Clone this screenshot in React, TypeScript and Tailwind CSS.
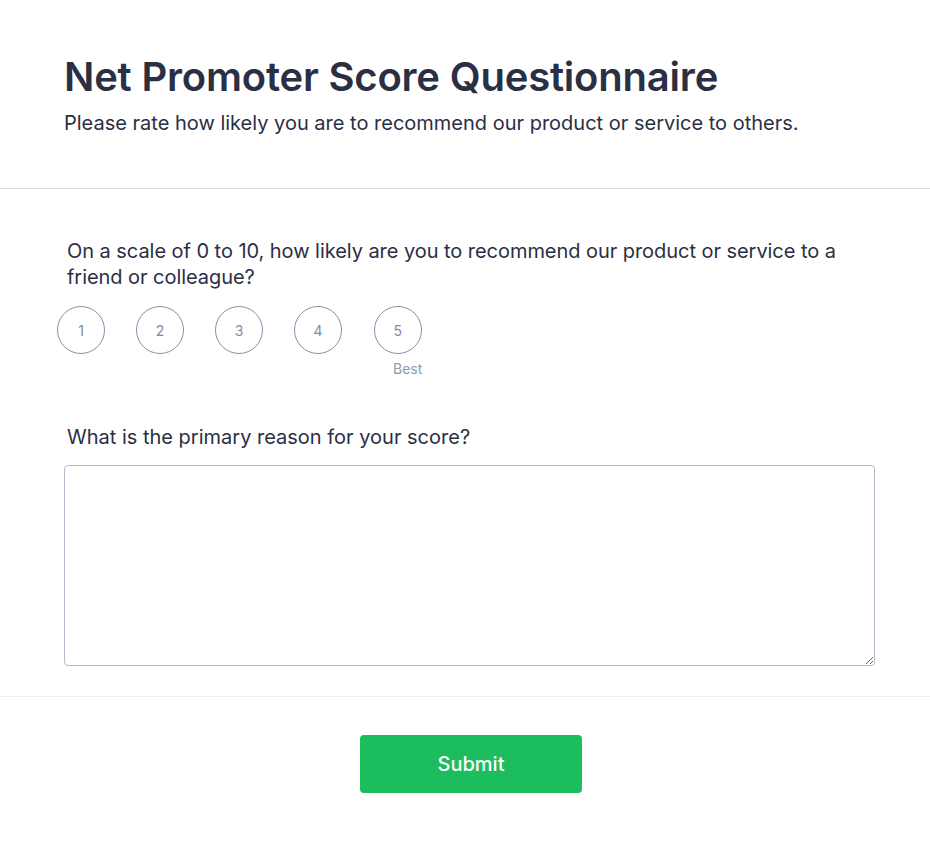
import React from 'react';

const scores = [1, 2, 3, 4, 5];

export default function App() {
  return (
    <div className="min-h-screen bg-white font-['Inter',sans-serif] text-[#2b2f44]">
      {/* Header */}
      <div className="px-16 pt-[53px] pb-[52px] border-b border-[#dcdde9]">
        <h1 className="text-[40px] leading-[48px] font-semibold tracking-[-0.2px]">Net Promoter Score Questionnaire</h1>
        <p className="mt-[9px] text-[20px] leading-[26px] text-[#2b2f44]">
          Please rate how likely you are to recommend our product or service to others.
        </p>
      </div>

      {/* Questions */}
      <div className="pt-[49px] pb-[30px] border-b border-[#eeeff5]">
        <div className="px-[67px]">
          <p className="text-[20px] leading-[26px] tracking-[-0.05px]">
            On a scale of 0 to 10, how likely are you to recommend our product or service to a friend or colleague?
          </p>
          <div className="mt-[16px] -ml-[10px] flex gap-[31px]">
            {scores.map((n) => (
              <div key={n} className="flex flex-col items-center">
                <button className="w-12 h-12 rounded-full border border-[#8990aa] text-[14px] text-[#7f8ba6] flex items-center justify-center">
                  {n}
                </button>
                {n === 5 ? (
                  <span className="mt-[5px] ml-[20px] text-[14px] leading-[20px] text-[#8d9cab]">Best</span>
                ) : (
                  <span className="mt-[5px] h-5" />
                )}
              </div>
            ))}
          </div>

          <p className="mt-[45px] text-[20px] leading-[26px]">What is the primary reason for your score?</p>
        </div>
        <div className="px-16 mt-[15px]">
          <textarea className="block w-[811px] h-[201px] rounded border border-[#b6b9cc] outline-none p-3" />
        </div>
      </div>

      {/* Footer */}
      <div className="pt-[38px] flex pl-[360px]">
        <button className="w-[222px] h-[58px] rounded bg-[#1bbd5c] text-white text-[20px] font-medium">Submit</button>
      </div>
    </div>
  );
}
